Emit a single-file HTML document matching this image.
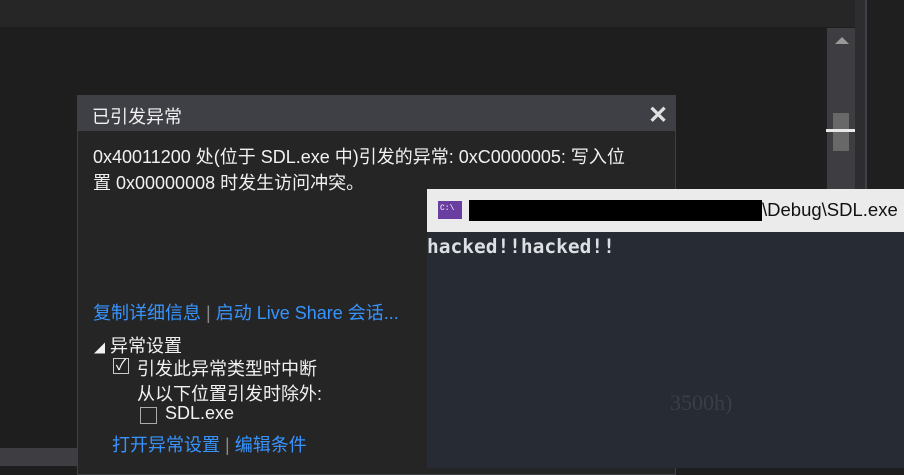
<!DOCTYPE html><html><head><style>
body{margin:0;width:904px;height:468px;background:#1e1e1e;position:relative;overflow:hidden;font-family:"Liberation Sans","Noto Sans CJK SC",sans-serif}
div{position:absolute;box-sizing:border-box}
.t{white-space:nowrap;color:#f1f1f1;font-size:18px}
.l{color:#3794ff}
</style></head><body>
<div style="left:0;top:0;width:855px;height:27px;background:#262626"></div>
<div style="left:827px;top:28px;width:28px;height:440px;background:#3e3e42"></div>
<div style="left:855px;top:0;width:10px;height:468px;background:#2d2d30"></div>
<div style="left:865px;top:0;width:2px;height:468px;background:#3f3f46"></div>
<div style="left:867px;top:0;width:37px;height:468px;background:#1f1f1f"></div>
<div style="left:835px;top:37px;width:0;height:0;border-left:7px solid transparent;border-right:7px solid transparent;border-bottom:7px solid #999"></div>
<div style="left:833px;top:113px;width:16px;height:38px;background:#686868"></div>
<div style="left:826px;top:129px;width:29px;height:3px;background:#e8e8e8"></div>
<div style="left:0;top:448px;width:77px;height:18px;background:#3e3e42"></div>
<div style="left:77px;top:95px;width:599px;height:380px;background:#252526;border:1px solid #3f3f46"></div>
<div style="left:78px;top:96px;width:597px;height:35px;background:#3f3f46"></div>
<div class="t" style="left:92px;top:103px">已引发异常</div>
<div style="left:648px;top:101px;color:#e0e0e0;font-size:24px;font-weight:bold">✕</div>
<div class="t" style="left:93px;top:144px;line-height:26px">0x40011200 处(位于 SDL.exe 中)引发的异常: 0xC0000005: 写入位<br>置 0x00000008 时发生访问冲突。</div>
<div class="t l" style="left:93px;top:299px">复制详细信息 <span style="color:#888">|</span> 启动 Live Share 会话...</div>
<div class="t" style="left:94px;top:332px"><span style="font-size:11px">◢</span> 异常设置</div>
<div style="left:113px;top:358px;width:16px;height:16px;border:1px solid #ccc;color:#fff;font-size:15px;line-height:14px;text-align:center">✓</div>
<div class="t" style="left:137px;top:355px">引发此异常类型时中断</div>
<div class="t" style="left:137px;top:380px">从以下位置引发时除外:</div>
<div style="left:140px;top:407px;width:17px;height:17px;border:1px solid #aaa"></div>
<div class="t" style="left:165px;top:403px">SDL.exe</div>
<div class="t l" style="left:112px;top:431px">打开异常设置 <span style="color:#888">|</span> 编辑条件</div>
<div style="left:427px;top:189px;width:477px;height:279px;background:#272b33"></div>
<div style="left:427px;top:189px;width:477px;height:43px;background:#ebebeb"></div>
<div style="left:438px;top:201px;width:24px;height:18px;background:#6a3ea1;color:#fff;font-size:8px;font-family:'Liberation Mono',monospace;padding:3px 2px">C:\</div>
<div style="left:469px;top:200px;width:293px;height:21px;background:#000"></div>
<div class="t" style="left:762px;top:199px;color:#111;font-size:18.5px">\Debug\SDL.exe</div>
<div class="t" style="left:427px;top:235px;color:#dcdfe4;font-family:'DejaVu Sans Mono',monospace;font-weight:bold;font-size:19.5px">hacked!!hacked!!</div>
<div class="t" style="left:670px;top:390px;color:#3a3e45;font-family:'Liberation Serif',serif;font-size:22px">3500h)</div>
</body></html>
